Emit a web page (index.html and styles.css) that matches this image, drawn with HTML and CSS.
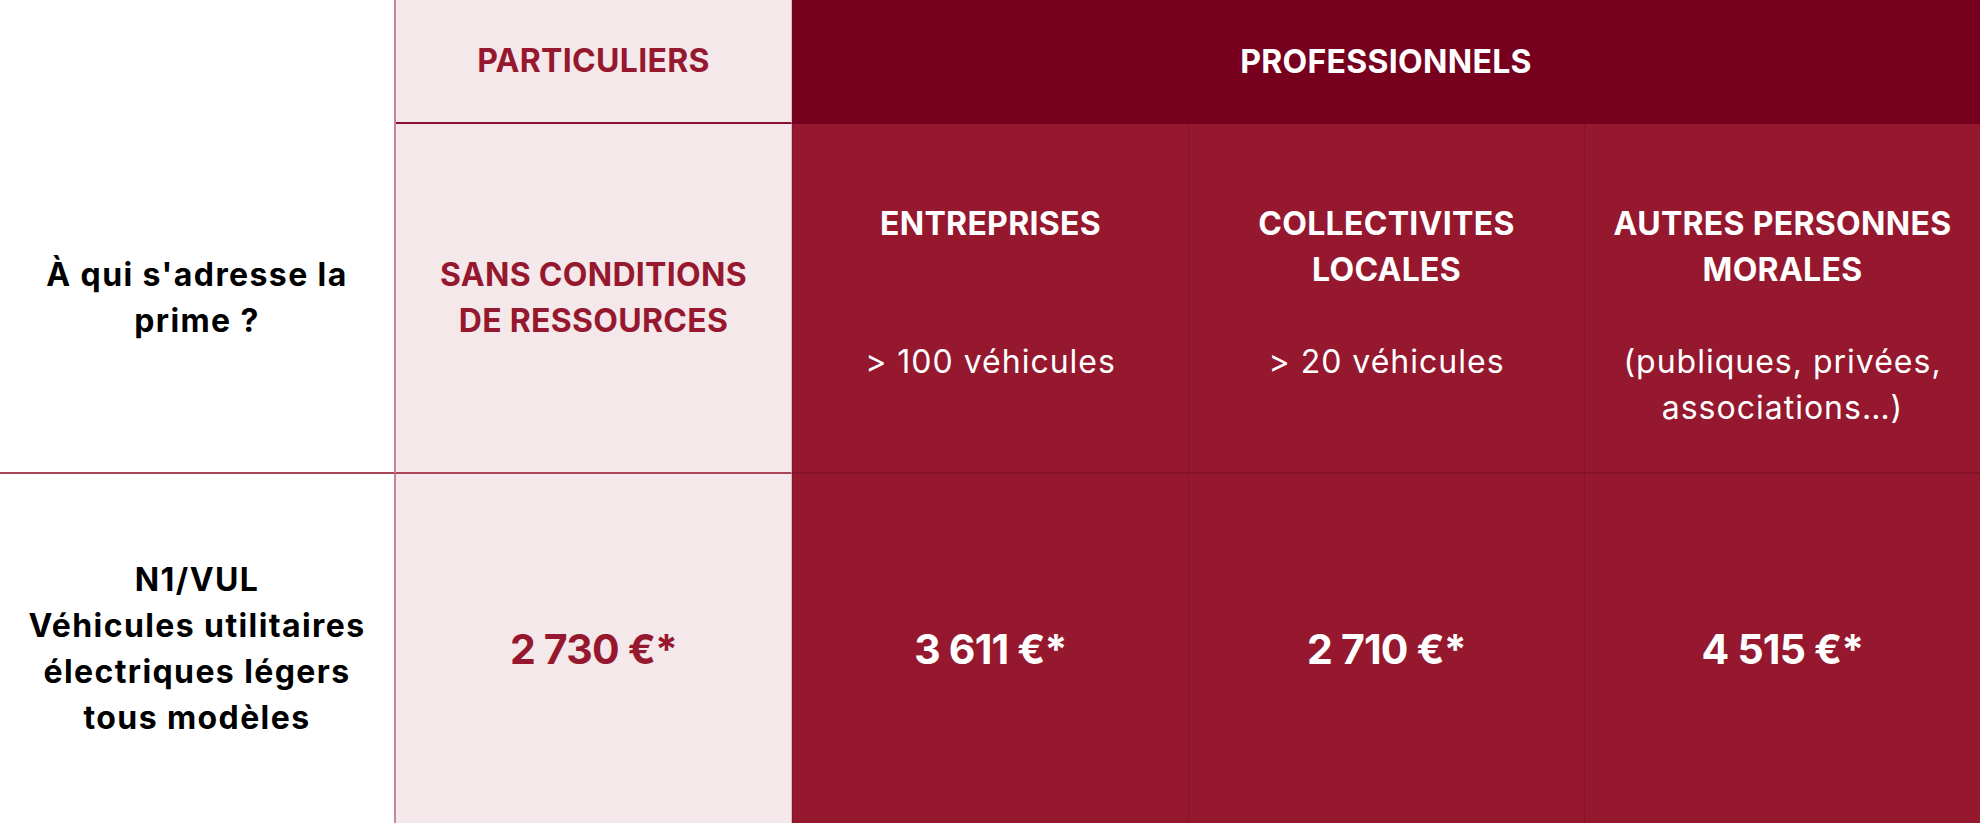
FILE: index.html
```html
<!DOCTYPE html>
<html lang="fr">
<head>
<meta charset="utf-8">
<title>Prime VUL</title>
<link rel="stylesheet" href="styles.css">
</head>
<body>
<div class="grid">
  <div class="cell c-label r-head"></div>
  <div class="cell c-part r-head head-part">PARTICULIERS</div>
  <div class="cell r-head head-pro">PROFESSIONNELS</div>

  <div class="cell c-label r-who label">À qui s'adresse la<br>prime ?</div>
  <div class="cell c-part r-who part-title">SANS CONDITIONS<br>DE RESSOURCES</div>
  <div class="cell c-pro r-who pro-who">
    <p class="pro-title">ENTREPRISES</p>
    <p class="pro-sub">&gt; 100 véhicules</p>
  </div>
  <div class="cell c-pro r-who pro-who">
    <p class="pro-title">COLLECTIVITES<br>LOCALES</p>
    <p class="pro-sub">&gt; 20 véhicules</p>
  </div>
  <div class="cell c-pro c-last r-who pro-who">
    <p class="pro-title">AUTRES PERSONNES<br>MORALES</p>
    <p class="pro-sub">(publiques, privées,<br>associations…)</p>
  </div>

  <div class="cell c-label r-val label">N1/VUL<br>Véhicules utilitaires<br>électriques légers<br>tous modèles</div>
  <div class="cell c-part r-val value value-part">2 730 €*</div>
  <div class="cell c-pro r-val value">3 611 €*</div>
  <div class="cell c-pro r-val value">2 710 €*</div>
  <div class="cell c-pro c-last r-val value">4 515 €*</div>
</div>
</body>
</html>
```

FILE: styles.css
```css
* { box-sizing: border-box; }
html, body { margin: 0; padding: 0; background: #ffffff; }
body {
  font-family: "Inter", "Noto Sans", sans-serif;
  font-size: 32px;
  line-height: 46px;
  color: #000;
}
.grid {
  display: grid;
  grid-template-columns: repeat(5, 396px);
  grid-template-rows: 124px 350px 349px;
  width: 1980px;
  height: 823px;
  overflow: hidden;
}
.cell {
  display: flex;
  flex-direction: column;
  justify-content: center;
  align-items: center;
  text-align: center;
  white-space: nowrap;
  font-weight: 700;
}
.c-label {
  background: #ffffff;
  border-right: 2px solid #c68796;
  color: #000;
}
.c-label.r-who { border-bottom: 2px solid #a9475a; }
.c-part {
  background: #f5e8eb;
  color: #96182f;
  border-right: 1px solid #d9b9c0;
}
.c-part.r-head { border-bottom: 2px solid #8a1230; }
.c-part.r-who { border-bottom: 2px solid #a9475a; }
.head-pro {
  grid-column: span 3;
  background: #77001f;
  color: #ffffff;
}
.c-pro {
  background: #96182f;
  color: #ffffff;
  border-left: 1px solid #86112a;
}
.c-pro.r-who { border-bottom: 2px solid #86112a; }
.label { letter-spacing: 1.4px; }
.head-part, .head-pro, .part-title { letter-spacing: 0.3px; }
.pro-who {
  justify-content: flex-start;
  padding-top: 77px;
}
.pro-title {
  margin: 0 0 46px;
  min-height: 92px;
  letter-spacing: 0.3px;
}
.pro-sub {
  margin: 0;
  font-weight: 400;
  letter-spacing: 1px;
}
.value {
  font-size: 41px;
  letter-spacing: -0.8px;
}
.value-part { color: #96182f; }
```
